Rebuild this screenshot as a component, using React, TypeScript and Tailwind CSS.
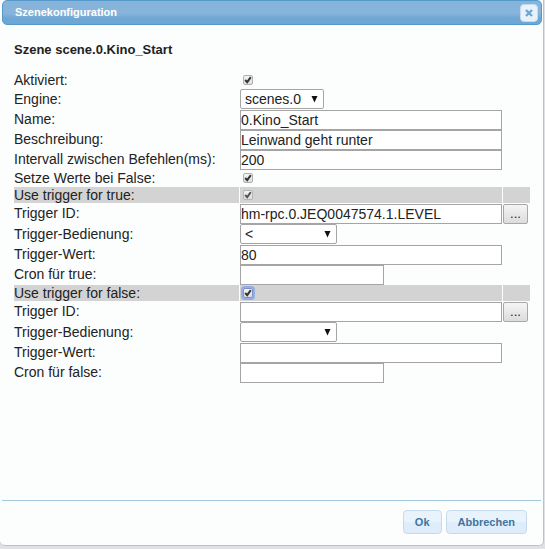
import React, { useState } from "react";

const fieldClass =
  "block h-5 border border-[#a5a5a5] bg-white px-0 text-[14px] leading-[18px] text-[#222] outline-none";

function Tick({ id, label, focused = false, muted = false }: { id: string; label: string; focused?: boolean; muted?: boolean }) {
  return (
    <span className="ml-[3px] inline-grid size-[10px] place-items-center">
      <input
        id={id}
        aria-label={label}
        type="checkbox"
        defaultChecked
        className={
          "peer col-start-1 row-start-1 m-0 size-[10px] appearance-none rounded-[2px] border bg-linear-to-b from-[#f4f4f4] to-[#dedede] outline-none " +
          (focused ? "border-[#7f93c0] ring-2 ring-[#93aee6]" : muted ? "border-[#b4b4b4]" : "border-[#b0b0b0]")
        }
      />
      <svg
        viewBox="0 0 10 10"
        className={
          "pointer-events-none invisible col-start-1 row-start-1 size-[10px] peer-checked:visible " +
          (muted ? "text-[#555]" : "text-[#333]")
        }
      >
        <path d="M2.2 5 4.2 7.1 7.8 2.2" fill="none" stroke="currentColor" strokeWidth="2" />
      </svg>
    </span>
  );
}

function CheckRow({ id, label, band = false, focused = false }: { id: string; label: string; band?: boolean; focused?: boolean }) {
  const cell = "h-4 " + (band ? "bg-[#d3d3d3]" : "");
  return (
    <div className="grid h-[17px] grid-cols-[225px_minmax(0,1fr)_27px] gap-x-px">
      <label htmlFor={id} className={cell + " leading-4"}>
        {label}
      </label>
      <div className={cell + " flex items-center"}>
        <Tick id={id} label={label} focused={focused} muted={band && !focused} />
      </div>
      <div className={cell} />
    </div>
  );
}

function TextRow({ id, label, value = "", short = false, browse = false }: { id: string; label: string; value?: string; short?: boolean; browse?: boolean }) {
  return (
    <div className="grid h-5 grid-cols-[225px_minmax(0,1fr)_27px] gap-x-px">
      <label htmlFor={id} className="leading-[18px]">
        {label}
      </label>
      <input id={id} type="text" defaultValue={value} className={fieldClass + (short ? " w-36" : " w-full")} />
      {browse && (
        <button
          type="button"
          aria-label={label + " auswählen"}
          className="h-5 w-[25px] rounded-[2px] border border-[#a8a8a8] bg-linear-to-b from-[#f5f5f5] to-[#dcdcdc] text-center text-[13px] leading-[18px] text-[#222]"
        >
          ...
        </button>
      )}
    </div>
  );
}

function SelectRow({ id, label, options, wide = false }: { id: string; label: string; options: string[]; wide?: boolean }) {
  return (
    <div className="grid h-[21px] grid-cols-[225px_minmax(0,1fr)_27px] gap-x-px">
      <label htmlFor={id} className="leading-5">
        {label}
      </label>
      <div className={"grid h-5 items-center " + (wide ? "w-[97px]" : "w-[84px]")}>
        <select
          id={id}
          className="col-start-1 row-start-1 h-5 w-full appearance-none rounded-[2px] border border-[#a5a5a5] bg-white pl-1 text-[14px] leading-[18px] text-[#222] outline-none"
        >
          {options.map((o) => (
            <option key={o}>{o}</option>
          ))}
        </select>
        <svg viewBox="0 0 7 7" className="pointer-events-none col-start-1 row-start-1 mr-[6px] size-[7px] justify-self-end">
          <path d="M0.5 0h6L3.5 6.5z" fill="#111" />
        </svg>
      </div>
    </div>
  );
}

export default function App() {
  const [open, setOpen] = useState(true);
  const close = () => setOpen(false);
  const buttonClass =
    "h-6 rounded-[4px] border border-[#c5dbec] bg-linear-to-b from-[#e9f3fc] from-50% to-[#dfedfa] to-50% px-[11px] text-[11px] leading-[22px] font-bold text-[#3f74a0]";

  return (
    <main className="flex min-h-screen bg-[#dfe1e4] pr-px pb-[3px] font-['Liberation_Sans',Arial,sans-serif]">
      {open && (
        <section
          role="dialog"
          aria-labelledby="dialog-title"
          className="flex min-w-0 flex-1 flex-col rounded-b-[5px] border-r border-b border-[#a6c9e2] bg-[#fcfdfd] text-[#222]"
        >
          <header className="mr-px ml-[2px] flex h-[25px] items-center justify-between rounded-[5px] border border-[#5599cb] bg-linear-to-b from-[#86b4da] from-55% to-[#6ea7d3] to-75% pr-[3px] pl-3">
            <h1 id="dialog-title" className="text-[11px] font-bold text-white">
              Szenekonfiguration
            </h1>
            <button
              type="button"
              aria-label="Schließen"
              onClick={close}
              className="grid size-[18px] place-items-center rounded-[4px] border border-[#c5dbec] bg-[#e8f2fb]"
            >
              <svg viewBox="0 0 8 8" className="size-2">
                <path d="M1 1l6 6M7 1L1 7" stroke="#6da8d5" strokeWidth="2.4" />
              </svg>
            </button>
          </header>

          <form className="flex-1 pt-[17px] pr-[13px] pl-[14px] text-[14px]" onSubmit={(e) => e.preventDefault()}>
            <h2 className="mb-[14px] text-[13px] leading-4 font-bold">Szene scene.0.Kino_Start</h2>
            <CheckRow id="enabled" label="Aktiviert:" />
            <SelectRow id="engine" label="Engine:" options={["scenes.0"]} />
            <TextRow id="name" label="Name:" value="0.Kino_Start" />
            <TextRow id="desc" label="Beschreibung:" value="Leinwand geht runter" />
            <TextRow id="interval" label="Intervall zwischen Befehlen(ms):" value="200" />
            <CheckRow id="set-false" label="Setze Werte bei False:" />
            <CheckRow id="use-true" label="Use trigger for true:" band />
            <TextRow id="true-id" label="Trigger ID:" value="hm-rpc.0.JEQ0047574.1.LEVEL" browse />
            <SelectRow id="true-cond" label="Trigger-Bedienung:" options={["<"]} wide />
            <TextRow id="true-value" label="Trigger-Wert:" value="80" />
            <TextRow id="true-cron" label="Cron für true:" short />
            <CheckRow id="use-false" label="Use trigger for false:" band focused />
            <TextRow id="false-id" label="Trigger ID:" browse />
            <SelectRow id="false-cond" label="Trigger-Bedienung:" options={[""]} wide />
            <TextRow id="false-value" label="Trigger-Wert:" />
            <TextRow id="false-cron" label="Cron für false:" short />
          </form>

          <footer className="mr-[2px] ml-[2px] flex h-[45px] items-start justify-end gap-1 border-t border-[#a6c9e2] pt-[9px] pr-[14px]">
            <button type="button" onClick={close} className={buttonClass}>
              Ok
            </button>
            <button type="button" onClick={close} className={buttonClass}>
              Abbrechen
            </button>
          </footer>
        </section>
      )}
    </main>
  );
}
